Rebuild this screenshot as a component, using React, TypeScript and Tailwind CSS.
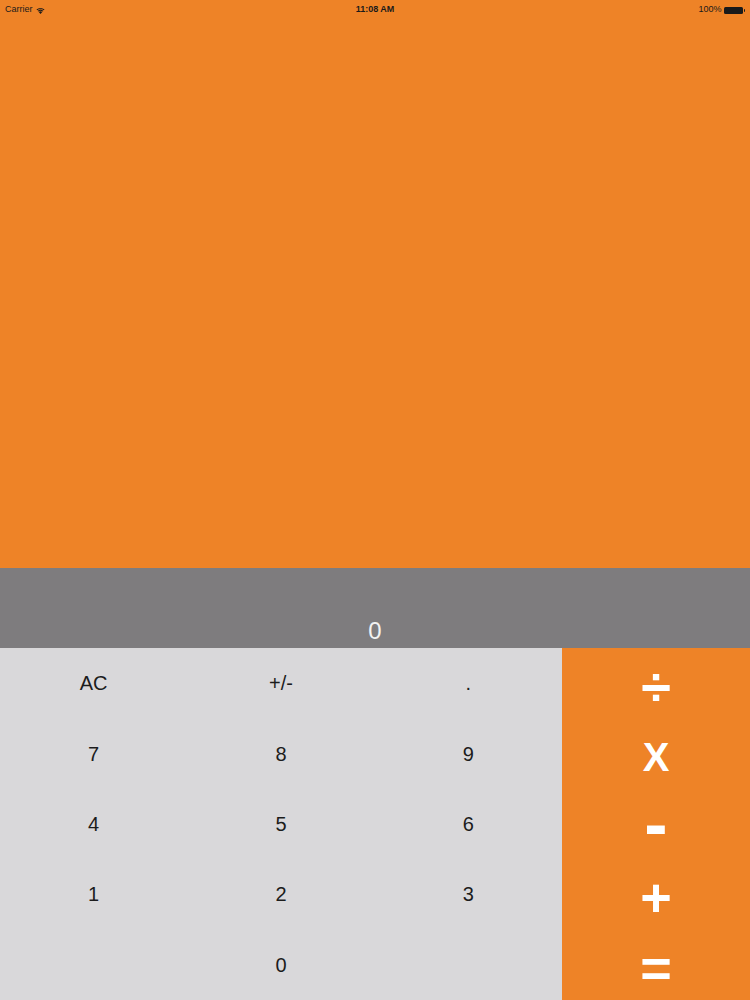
import React from "react";

const font = { fontFamily: '"Liberation Sans", Arial, sans-serif' };

function Wifi() {
  return (
    <svg width="9" height="7" viewBox="0 0 18 14" className="ml-[3px]">
      <path d="M9 14 L5.5 10 A5 5 0 0 1 12.5 10 Z" fill="#1a1a1a" />
      <path d="M3.5 7.8 A8 8 0 0 1 14.5 7.8 L13.2 9.2 A6.2 6.2 0 0 0 4.8 9.2 Z" fill="#1a1a1a" />
      <path d="M1 5.2 A11.5 11.5 0 0 1 17 5.2 L15.6 6.6 A9.6 9.6 0 0 0 2.4 6.6 Z" fill="#1a1a1a" />
    </svg>
  );
}

function Battery() {
  return (
    <span className="ml-[2px] flex items-center">
      <span className="block h-[7px] w-[19px] rounded-[1.5px] bg-[#1a1a1a]" />
      <span className="ml-[1px] block h-[3px] w-[1.5px] rounded-r-[1px] bg-[#1a1a1a]" />
    </span>
  );
}

const digitRows = [
  ["AC", "+/-", "."],
  ["7", "8", "9"],
  ["4", "5", "6"],
  ["1", "2", "3"],
  ["", "0", ""],
];

const ops: { label: string; cls: string }[] = [
  { label: "÷", cls: "text-[54px] pt-[6px]" },
  { label: "X", cls: "text-[40px] pt-[6px]" },
  { label: "-", cls: "text-[70px] pt-0" },
  { label: "+", cls: "text-[54px] pt-[6px]" },
  { label: "=", cls: "text-[54px] pt-[6px]" },
];

export default function App() {
  return (
    <div className="flex h-[1000px] w-full flex-col overflow-hidden" style={font}>
      <div className="flex h-[568px] flex-col bg-[#ee8327]">
        <div className="relative flex h-[20px] items-center px-[5px] text-[9px] text-[#1a1a1a]">
          <div className="flex items-center">
            <span>Carrier</span>
            <Wifi />
          </div>
          <div className="absolute left-0 right-0 text-center font-semibold">11:08 AM</div>
          <div className="ml-auto flex items-center">
            <span>100%</span>
            <Battery />
          </div>
        </div>
      </div>
      <div className="flex h-[80px] items-end justify-center bg-[#7e7c7e] pb-[5px]">
        <span className="text-[24px] leading-none text-[#f2f2f2]">0</span>
      </div>
      <div className="flex h-[352px] bg-[#d9d8da]">
        <div className="grid w-[562px] grid-cols-3 grid-rows-5">
          {digitRows.flat().map((d, i) => (
            <div key={i} className="flex items-center justify-center text-[20px] text-[#1c1c1c]">
              {d}
            </div>
          ))}
        </div>
        <div className="grid flex-1 grid-rows-5 bg-[#ee8327]">
          {ops.map((o) => (
            <div
              key={o.label}
              className={`flex items-center justify-center font-bold leading-none text-white ${o.cls}`}
            >
              {o.label}
            </div>
          ))}
        </div>
      </div>
    </div>
  );
}
